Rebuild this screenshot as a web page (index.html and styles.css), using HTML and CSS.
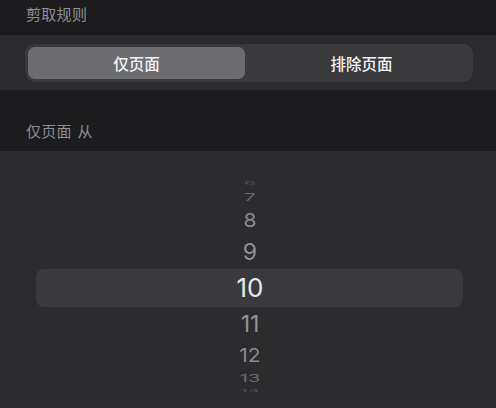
FILE: index.html
```html
<!DOCTYPE html>
<html lang="zh">
<head>
<meta charset="utf-8">
<link rel="stylesheet" href="styles.css">
</head>
<body>
<div class="screen">
  <div class="section-header top">剪取规则</div>
  <div class="card">
    <div class="segmented">
      <div class="seg active">仅页面</div>
      <div class="seg">排除页面</div>
    </div>
  </div>
  <div class="section-header lower">仅页面 从</div>
  <div class="picker">
    <div class="band"></div>
    <div class="wheel">
      <div class="row r6">6</div>
      <div class="row r7">7</div>
      <div class="row r8">8</div>
      <div class="row r9">9</div>
      <div class="row r10">10</div>
      <div class="row r11">11</div>
      <div class="row r12">12</div>
      <div class="row r13">13</div>
      <div class="row r14">14</div>
    </div>
  </div>
</div>
</body>
</html>
```
FILE: styles.css
```css
html, body {
  margin: 0;
  padding: 0;
  background: #1c1c1e;
}
.screen {
  width: 496px;
  height: 408px;
  overflow: hidden;
  display: flex;
  flex-direction: column;
  font-family: "Noto Sans CJK SC", "Inter", sans-serif;
}
.section-header {
  color: #8e8e93;
  font-size: 15px;
  letter-spacing: 0.3px;
  word-spacing: 2px;
  line-height: 18px;
  padding-left: 26px;
  box-sizing: border-box;
}
.section-header.top {
  height: 35px;
  padding-top: 5px;
}
.section-header.lower {
  height: 62px;
  padding-top: 32px;
  border-top: 1px solid #2a2a2c;
}
.card {
  background: #2c2c2e;
  height: 54px;
  box-sizing: border-box;
  padding: 9px 23px 0 25px;
}
.segmented {
  height: 38px;
  box-sizing: border-box;
  background: #3a3a3d;
  border-radius: 9px;
  padding: 3px;
  display: grid;
  grid-template-columns: 1fr 1fr;
  column-gap: 8px;
  box-shadow: 0 0 1px rgba(0,0,0,0.5);
}
.seg {
  display: flex;
  align-items: center;
  justify-content: center;
  color: #f2f2f7;
  font-size: 15.5px;
  font-weight: 500;
  border-radius: 7px;
}
.seg.active {
  background: #6c6c71;
}
.picker {
  flex: 1;
  background: #2c2c2e;
  position: relative;
  font-family: "Inter", "Liberation Sans", sans-serif;
}
.band {
  position: absolute;
  left: 36px;
  right: 33px;
  top: 118px;
  height: 38px;
  background: #3a3a3c;
  border-radius: 8px;
}
.wheel {
  position: relative;
  padding-top: 27px;
  display: flex;
  flex-direction: column;
  align-items: center;
}
.row {
  text-align: center;
  width: 100px;
  margin-left: 4px;
  color: #8e8e93;
}
.r6  { height: 12px; line-height: 12px; font-size: 19px; transform: scaleY(0.22); color: #505054; }
.r7  { height: 14px; line-height: 14px; font-size: 20px; transform: scaleY(0.55); color: #6a6a6e; }
.r8  { height: 34px; line-height: 34px; font-size: 21px; transform: scaleY(0.92); color: #8a8a8e; }
.r9  { height: 28px; line-height: 28px; font-size: 23px; transform: scaleY(0.98); color: #939397; }
.r10 { height: 44px; line-height: 44px; font-size: 26px; color: #e8e8ec; }
.r11 { height: 28px; line-height: 28px; font-size: 23px; transform: scaleY(0.98); color: #939397; }
.r12 { height: 36px; line-height: 36px; font-size: 21px; transform: scaleY(0.92); color: #8a8a8e; }
.r13 { height: 8px;  line-height: 8px;  font-size: 20px; transform: scaleY(0.55); color: #6a6a6e; }
.r14 { height: 18px; line-height: 18px; font-size: 19px; transform: scaleY(0.2); color: #505054; }
```
